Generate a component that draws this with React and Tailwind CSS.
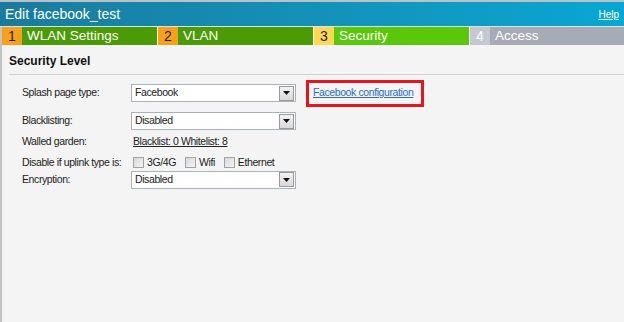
import React from "react";

const tabs = [
  { n: "1", label: "WLAN Settings", num: "bg-[#f7a11a]", body: "bg-[#4b9b06]", numText: "text-[#222]" },
  { n: "2", label: "VLAN", num: "bg-[#f7a11a]", body: "bg-[#4b9b06]", numText: "text-[#222]" },
  { n: "3", label: "Security", num: "bg-[#ffd955]", body: "bg-[#5bc70a]", numText: "text-[#222]" },
  { n: "4", label: "Access", num: "bg-[#c3c8d1]", body: "bg-[#a6abb6]", numText: "text-white" },
];

function Select({ value }) {
  return (
    <div className="flex h-[18px] w-[165px] items-center border border-[#a9b1ba] bg-white">
      <span className="flex-1 pl-[3px]">{value}</span>
      <span className="mr-px flex h-[15px] w-[15px] items-center justify-center border border-[#9a9a9a] bg-gradient-to-b from-[#f2f2f2] to-[#d9d9d9]">
        <svg width="7" height="4" viewBox="0 0 7 4">
          <path d="M0 0h7L3.5 4z" fill="#111" />
        </svg>
      </span>
    </div>
  );
}

function Check({ label }) {
  return (
    <span className="mr-[9px] flex items-center gap-[3px]">
      <span className="h-[11px] w-[11px] border border-[#a2a2a2] bg-gradient-to-br from-[#d8d8d8] to-[#f4f4f4]" />
      <span>{label}</span>
    </span>
  );
}

function Row({ label, children, className = "" }) {
  return (
    <div className={`flex items-center whitespace-nowrap text-[10.5px] tracking-[-0.4px] text-[#222] ${className}`}>
      <span className="w-[109px] shrink-0">{label}</span>
      <div className="flex items-center">{children}</div>
    </div>
  );
}

export default function App() {
  return (
    <div
      className="h-[322px] w-[624px] overflow-hidden bg-[#f4f4f4]"
      style={{ fontFamily: '"Liberation Sans", Arial, sans-serif' }}
    >
      {/* title bar */}
      <div className="flex h-[26px] items-center justify-between border-t-2 border-[#b9c2c6] bg-gradient-to-r from-[#197b9e] to-[#07a7d3] pl-[5px] pr-[5px]">
        <span className="text-[14px] text-white">Edit facebook_test</span>
        <span className="text-[10px] text-white underline">Help</span>
      </div>
      <div className="h-px bg-[#d6e6ea]" />

      {/* wizard steps */}
      <div className="flex h-[18px] gap-px border-l-2 border-[#c4c4c4]">
        {tabs.map((t, i) => (
          <div key={t.n} className={`flex ${i === 3 ? "flex-1" : "w-[155px]"}`}>
            <span className={`flex w-[20px] items-center justify-center text-[14px] ${t.num} ${t.numText}`}>
              {t.n}
            </span>
            <span className={`flex flex-1 items-center pl-[5px] text-[13.5px] text-white ${t.body}`}>{t.label}</span>
          </div>
        ))}
      </div>

      {/* body */}
      <div className="h-[277px] border-l-2 border-[#c4c4c4] pl-[7px]">
        <div className="border-b border-[#cfcfcf] pb-[2px] pt-[3px]">
          <span className="text-[12px] font-bold text-[#111]">Security Level</span>
        </div>

        <div className="pl-[13px]">
          <Row label="Splash page type:" className="mt-[9px]">
            <Select value="Facebook" />
            <div className="-my-[5px] ml-[10px] flex h-[27px] w-[118px] items-center border-[3px] border-[#e6141c] pl-[4px]">
              <span className="text-[#2a6ec2] underline">Facebook configuration</span>
            </div>
          </Row>
          <Row label="Blacklisting:" className="mt-[10px]">
            <Select value="Disabled" />
          </Row>
          <Row label="Walled garden:" className="mt-[4px]">
            <span className="pl-[2px] underline">Blacklist: 0 Whitelist: 8</span>
          </Row>
          <Row label="Disable if uplink type is:" className="mt-[5px]">
            <span className="w-[2px]" />
            <Check label="3G/4G" />
            <Check label="Wifi" />
            <Check label="Ethernet" />
          </Row>
          <Row label="Encryption:" className="mt-0">
            <Select value="Disabled" />
          </Row>
        </div>
      </div>
    </div>
  );
}
